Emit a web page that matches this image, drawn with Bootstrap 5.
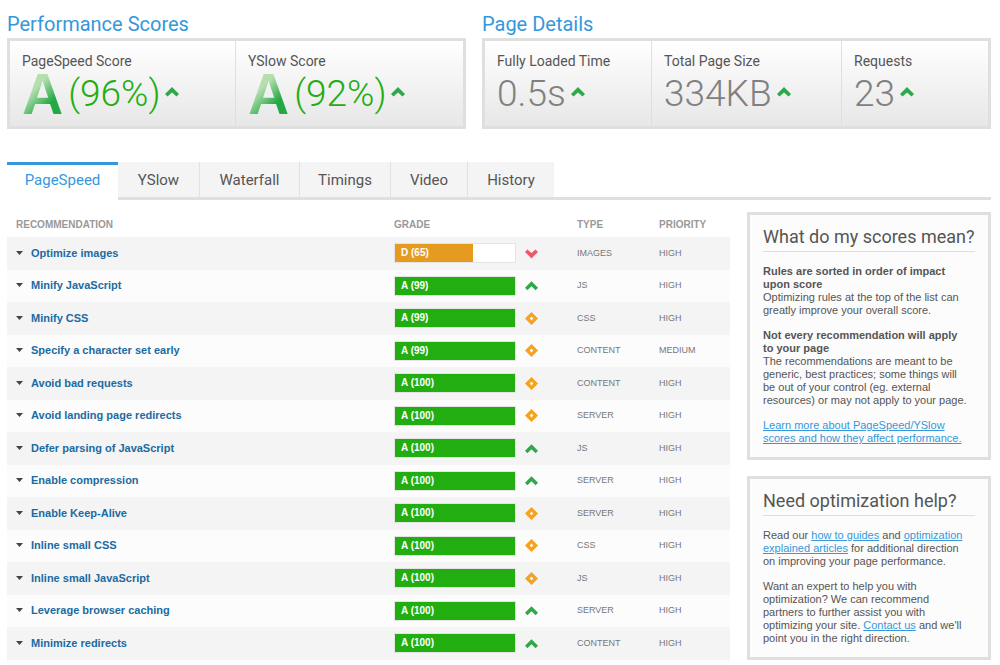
<!DOCTYPE html>
<html lang="en">
<head>
<meta charset="utf-8">
<meta name="viewport" content="width=device-width, initial-scale=1">
<title>Performance report</title>
<link href="https://cdn.jsdelivr.net/npm/bootstrap@5.3.0/dist/css/bootstrap.min.css" rel="stylesheet">
<style>
  body { font-family: "Liberation Sans", Arial, sans-serif; font-size: 11px; line-height: 13px; color: #555; background: #fff; }
  .page { padding: 12px 9px 0 7px; }
  h2, h3, .score-label, .score-value, .report-tabs { font-family: Roboto, "Open Sans", sans-serif; }
  h2 { font-size: 20px; line-height: 24px; font-weight: 400; color: #3498db; margin: 0 0 2px; }
  .summary { display: grid; grid-template-columns: 459fr 509fr; gap: 16px; }
  .panel { border: 3px solid #dfdfdf; background: linear-gradient(#fff, #e7e7e7); display: grid; height: 91px; }
  .panel-scores { grid-template-columns: 225fr 228fr; }
  .panel-details { grid-template-columns: 166fr 190fr 147fr; }
  .score-cell { padding: 10px 0 0 12px; white-space: nowrap; }
  .score-cell + .score-cell { border-left: 1px solid #dfdfdf; }
  .score-label { font-size: 14px; line-height: 20px; color: #555; }
  .score-value { font-size: 37px; line-height: 46px; height: 46px; font-weight: 300; color: #808080; display: flex; align-items: center; }
  .score-value.good { color: #22ad11; }
  .score-value svg { width: 14px; height: 10px; margin: 0 0 4px 5px; }
  .grade-letter { font: bold 57px/46px "Liberation Sans", Arial, sans-serif; margin-right: 5px; color: transparent; background: linear-gradient(135deg, #b5dfae 35%, #22a845 70%); -webkit-background-clip: text; background-clip: text; }
  .report-tabs { margin-top: 33px; border: 0; flex-wrap: nowrap; box-shadow: inset 0 -3px #dfdfdf; font-size: 15px; }
  .report-tabs .nav-link { border: 0; border-radius: 0; margin: 0 0 3px; padding: 3px 0 0; height: 35px; line-height: 31px; color: #555; background: #f4f4f4; border-left: 1px solid #e2e2e2; text-align: center; width: 100%; }
  .report-tabs .nav-link.active { margin: 0; height: 38px; padding: 0; border: 0; border-top: 3px solid #3498db; background: #fff; color: #3498db; }
  .report-tabs li:nth-child(2) .nav-link { border-left: 0; }
  .w-a { width: 111px; } .w-b { width: 81px; } .w-c { width: 100px; } .w-d { width: 91px; } .w-e { width: 77px; } .w-f { width: 87px; }
  .report { display: grid; grid-template-columns: minmax(0, 1fr) 244px; gap: 17px; align-items: start; }
  .rules { width: 100%; table-layout: fixed; border-collapse: separate; border-spacing: 0; padding-bottom: 5px; background: #fcfcfc; }
  .rules thead { background: #fff; }
  .rules th { font-size: 10px; height: 37px; padding: 12px 0 0; color: #999; font-weight: 700; }
  .rules td { font-size: 9px; padding: 0 0 1px; color: #777; vertical-align: middle; }
  .rules td:first-child { padding-bottom: 0; }
  .rules th:first-child, .rules td:first-child { padding-left: 9px; }
  .rules tbody tr { height: 32px; background: #fcfcfc; }
  .rules tbody tr:nth-child(odd) { height: 33px; background: #f4f4f4; }
  .rules td a { font-size: 11px; font-weight: 700; color: #1a6ba3; text-decoration: none; }
  .caret { width: 7px; height: 4px; margin-right: 8px; vertical-align: 2px; }
  .meter { width: 122px; height: 20px; border: 1px solid #e4e4e4; background: #fff; }
  .meter-fill { height: 18px; line-height: 18px; padding-left: 6px; font-size: 10px; font-weight: 700; color: #fff; background: #22ad11; white-space: nowrap; }
  .meter-fill.warn { background: #e59b20; }
  .trend { width: 13px; height: 13px; margin-left: 9px; vertical-align: middle; }
  .side { padding-top: 12px; }
  .help-box { border: 3px solid #dfdfdf; background: #fcfcfc; padding: 11px 13px 12px; }
  .help-box h3 { font-size: 18px; line-height: 22px; font-weight: 400; margin: 0 0 13px; padding-bottom: 3px; border-bottom: 1px solid #dfdfdf; white-space: nowrap; }
  .help-box p { margin: 0 0 12px; padding-right: 8px; }
  .help-box p:last-child { margin: 0; }
  .help-box a { color: #3498db; }
</style>
</head>
<body>
<svg class="d-none" aria-hidden="true">
  <symbol id="up" viewBox="0 0 14 10"><path fill="#2fa84a" d="M7 0 14 7 11.500 9.500 7 5.500 2.500 9.500 0 7z"/></symbol>
  <symbol id="tup" viewBox="0 0 12 12"><path fill="#2fa84a" d="M6 2 12 8 9.800 10.300 6 6.800 2.200 10.300 0 8z"/></symbol>
  <symbol id="tdown" viewBox="0 0 12 12"><path fill="#ef5868" d="M6 10.500 12 4.500 9.800 2.200 6 5.500 2.200 2.200 0 4.500z"/></symbol>
  <symbol id="same" viewBox="0 0 12 12"><path fill="#f5a21d" fill-rule="evenodd" d="M6 0 12 6 6 12 0 6zM6 4.200 4.200 6 6 7.800 7.800 6z"/></symbol>
  <symbol id="tri" viewBox="0 0 7 4"><path fill="#444" d="M0 0h7L3.500 4z"/></symbol>
</svg>
<main class="container-fluid page">
  <div class="summary">
    <section>
      <h2>Performance Scores</h2>
      <div class="panel panel-scores">
        <div class="score-cell"><div class="score-label">PageSpeed Score</div><div class="score-value good"><span class="grade-letter">A</span>(96%)<svg><use href="#up"/></svg></div></div>
        <div class="score-cell"><div class="score-label">YSlow Score</div><div class="score-value good"><span class="grade-letter">A</span>(92%)<svg><use href="#up"/></svg></div></div>
      </div>
    </section>
    <section>
      <h2>Page Details</h2>
      <div class="panel panel-details">
        <div class="score-cell"><div class="score-label">Fully Loaded Time</div><div class="score-value">0.5s<svg><use href="#up"/></svg></div></div>
        <div class="score-cell"><div class="score-label">Total Page Size</div><div class="score-value">334KB<svg><use href="#up"/></svg></div></div>
        <div class="score-cell"><div class="score-label">Requests</div><div class="score-value">23<svg><use href="#up"/></svg></div></div>
      </div>
    </section>
  </div>

  <ul class="nav nav-tabs report-tabs">
    <li class="nav-item w-a"><a class="nav-link active" href="#pagespeed">PageSpeed</a></li>
    <li class="nav-item w-b"><a class="nav-link" href="#yslow">YSlow</a></li>
    <li class="nav-item w-c"><a class="nav-link" href="#waterfall">Waterfall</a></li>
    <li class="nav-item w-d"><a class="nav-link" href="#timings">Timings</a></li>
    <li class="nav-item w-e"><a class="nav-link" href="#video">Video</a></li>
    <li class="nav-item w-f"><a class="nav-link" href="#history">History</a></li>
  </ul>

  <div class="report">
    <table class="rules" id="pagespeed">
      <colgroup><col><col style="width:122px"><col style="width:61px"><col style="width:82px"><col style="width:71px"></colgroup>
      <thead><tr><th>RECOMMENDATION</th><th colspan="2">GRADE</th><th>TYPE</th><th>PRIORITY</th></tr></thead>
      <tbody>
        <tr><td><svg class="caret"><use href="#tri"/></svg><a href="#r1">Optimize images</a></td><td><div class="meter"><div class="meter-fill warn" style="width:65%">D (65)</div></div></td><td><svg class="trend"><use href="#tdown"/></svg></td><td>IMAGES</td><td>HIGH</td></tr>
        <tr><td><svg class="caret"><use href="#tri"/></svg><a href="#r2">Minify JavaScript</a></td><td><div class="meter"><div class="meter-fill">A (99)</div></div></td><td><svg class="trend"><use href="#tup"/></svg></td><td>JS</td><td>HIGH</td></tr>
        <tr><td><svg class="caret"><use href="#tri"/></svg><a href="#r3">Minify CSS</a></td><td><div class="meter"><div class="meter-fill">A (99)</div></div></td><td><svg class="trend"><use href="#same"/></svg></td><td>CSS</td><td>HIGH</td></tr>
        <tr><td><svg class="caret"><use href="#tri"/></svg><a href="#r4">Specify a character set early</a></td><td><div class="meter"><div class="meter-fill">A (99)</div></div></td><td><svg class="trend"><use href="#same"/></svg></td><td>CONTENT</td><td>MEDIUM</td></tr>
        <tr><td><svg class="caret"><use href="#tri"/></svg><a href="#r5">Avoid bad requests</a></td><td><div class="meter"><div class="meter-fill">A (100)</div></div></td><td><svg class="trend"><use href="#same"/></svg></td><td>CONTENT</td><td>HIGH</td></tr>
        <tr><td><svg class="caret"><use href="#tri"/></svg><a href="#r6">Avoid landing page redirects</a></td><td><div class="meter"><div class="meter-fill">A (100)</div></div></td><td><svg class="trend"><use href="#same"/></svg></td><td>SERVER</td><td>HIGH</td></tr>
        <tr><td><svg class="caret"><use href="#tri"/></svg><a href="#r7">Defer parsing of JavaScript</a></td><td><div class="meter"><div class="meter-fill">A (100)</div></div></td><td><svg class="trend"><use href="#tup"/></svg></td><td>JS</td><td>HIGH</td></tr>
        <tr><td><svg class="caret"><use href="#tri"/></svg><a href="#r8">Enable compression</a></td><td><div class="meter"><div class="meter-fill">A (100)</div></div></td><td><svg class="trend"><use href="#tup"/></svg></td><td>SERVER</td><td>HIGH</td></tr>
        <tr><td><svg class="caret"><use href="#tri"/></svg><a href="#r9">Enable Keep-Alive</a></td><td><div class="meter"><div class="meter-fill">A (100)</div></div></td><td><svg class="trend"><use href="#same"/></svg></td><td>SERVER</td><td>HIGH</td></tr>
        <tr><td><svg class="caret"><use href="#tri"/></svg><a href="#r10">Inline small CSS</a></td><td><div class="meter"><div class="meter-fill">A (100)</div></div></td><td><svg class="trend"><use href="#same"/></svg></td><td>CSS</td><td>HIGH</td></tr>
        <tr><td><svg class="caret"><use href="#tri"/></svg><a href="#r11">Inline small JavaScript</a></td><td><div class="meter"><div class="meter-fill">A (100)</div></div></td><td><svg class="trend"><use href="#same"/></svg></td><td>JS</td><td>HIGH</td></tr>
        <tr><td><svg class="caret"><use href="#tri"/></svg><a href="#r12">Leverage browser caching</a></td><td><div class="meter"><div class="meter-fill">A (100)</div></div></td><td><svg class="trend"><use href="#tup"/></svg></td><td>SERVER</td><td>HIGH</td></tr>
        <tr><td><svg class="caret"><use href="#tri"/></svg><a href="#r13">Minimize redirects</a></td><td><div class="meter"><div class="meter-fill">A (100)</div></div></td><td><svg class="trend"><use href="#tup"/></svg></td><td>CONTENT</td><td>HIGH</td></tr>
      </tbody>
    </table>

    <aside class="d-flex flex-column gap-3 side">
      <section class="help-box">
        <h3>What do my scores mean?</h3>
        <p><strong>Rules are sorted in order of impact upon score</strong><br>Optimizing rules at the top of the list can greatly improve your overall score.</p>
        <p><strong>Not every recommendation will apply to your page</strong><br>The recommendations are meant to be generic, best practices; some things will be out of your control (eg. external resources) or may not apply to your page.</p>
        <p><a href="#learn">Learn more about PageSpeed/YSlow scores and how they affect performance.</a></p>
      </section>
      <section class="help-box">
        <h3>Need optimization help?</h3>
        <p>Read our <a href="#guides">how to guides</a> and <a href="#articles">optimization explained articles</a> for additional direction on improving your page performance.</p>
        <p>Want an expert to help you with optimization? We can recommend partners to further assist you with optimizing your site. <a href="#contact">Contact us</a> and we'll point you in the right direction.</p>
      </section>
    </aside>
  </div>
</main>
<script src="https://cdn.jsdelivr.net/npm/bootstrap@5.3.0/dist/js/bootstrap.bundle.min.js"></script>
</body>
</html>
